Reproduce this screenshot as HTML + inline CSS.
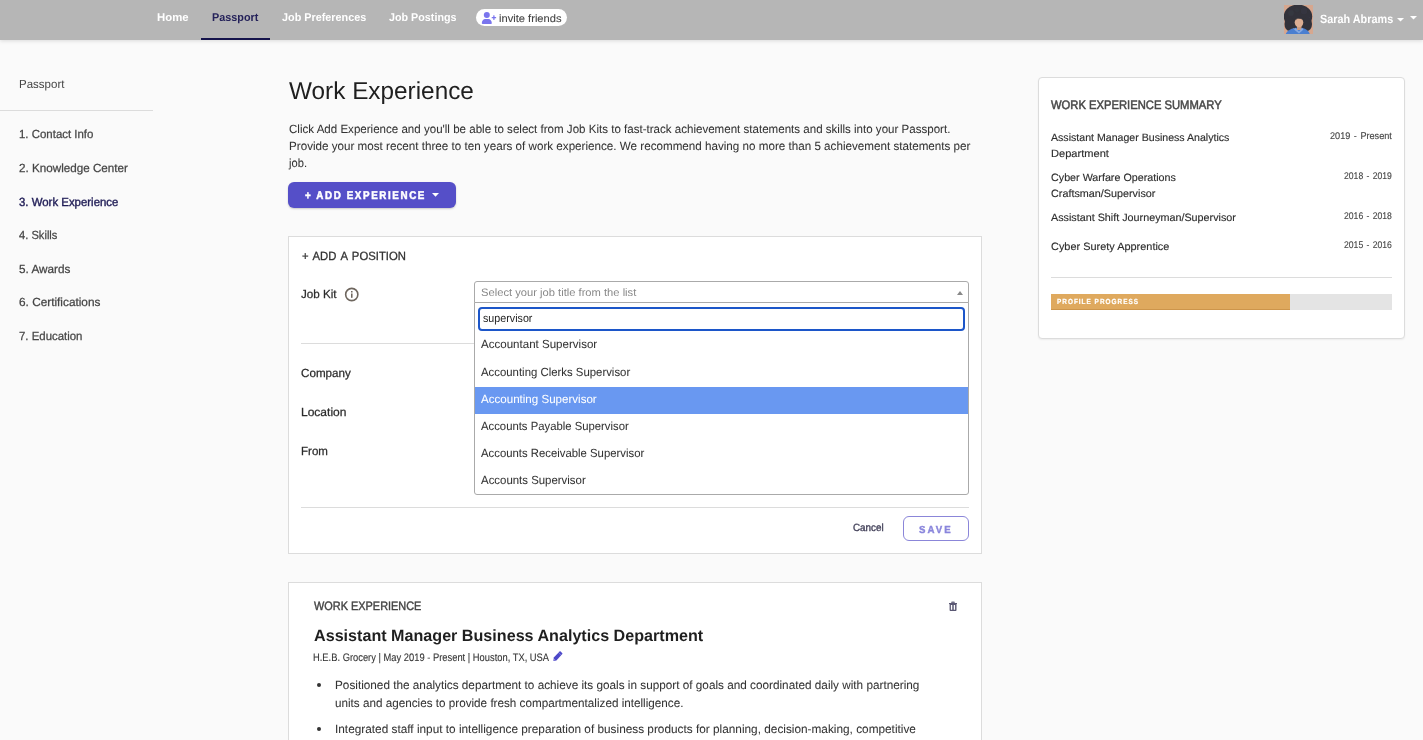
<!DOCTYPE html>
<html><head><meta charset="utf-8"><title>Work Experience</title>
<style>
html,body{margin:0;padding:0}
body{width:1423px;height:740px;overflow:hidden;background:#fafafa;font-family:"Liberation Sans",sans-serif;position:relative}
.a{position:absolute;box-sizing:border-box}
.t{position:absolute;transform-origin:0 0;white-space:nowrap;line-height:20px;font-family:"Liberation Sans",sans-serif}
#nav{left:0;top:0;width:1423px;height:40px;background:#b6b6b6;box-shadow:0 1px 4px rgba(0,0,0,.13)}
#tx{position:absolute;left:0;top:0;width:1423px;height:740px;will-change:transform}
.card{background:#fff;border:1px solid #dcdcdc}
</style></head><body>
<div class="a" id="nav"></div>
<div class="a" style="left:201px;top:38px;width:69px;height:2px;background:#15134b"></div>
<div class="a" style="left:476px;top:9px;width:91px;height:17px;border-radius:9px;background:#fff"></div>
<svg class="a" style="left:481px;top:11px" width="16" height="14" viewBox="0 0 16 14"><g fill="#7a75ee"><circle cx="5.8" cy="4" r="3"/><path d="M0.8 12.2c0-2.6 1.6-4.3 3.4-4.3h3.2c1.8 0 3.4 1.7 3.4 4.3c0 .5-.4.8-.8.8H1.6c-.4 0-.8-.3-.8-.8z"/><rect x="10.6" y="6" width="4.6" height="1.3" rx=".4"/><rect x="12.25" y="4.35" width="1.3" height="4.6" rx=".4"/></g></svg>
<!-- avatar -->
<svg class="a" style="left:1284px;top:5px" width="29" height="29" viewBox="0 0 29 29"><defs><filter id="bl" x="-10%" y="-10%" width="120%" height="120%"><feGaussianBlur stdDeviation="0.7"/></filter><clipPath id="cp"><rect width="29" height="29"/></clipPath></defs><g clip-path="url(#cp)"><rect width="29" height="29" fill="#d6a78f"/><g filter="url(#bl)"><ellipse cx="14" cy="11.5" rx="14.2" ry="12" fill="#31323a"/><circle cx="7" cy="8" r="3" fill="#3a3b45" opacity=".6"/><circle cx="20" cy="6" r="3.200" fill="#383a46" opacity=".55"/><circle cx="24" cy="14" r="2.600" fill="#3a3c4a" opacity=".5"/><circle cx="4.500" cy="16" r="2.500" fill="#383a46" opacity=".5"/><circle cx="13" cy="5" r="2.500" fill="#34353e" opacity=".6"/><ellipse cx="5.5" cy="19" rx="5" ry="7" fill="#31323a"/><ellipse cx="23" cy="19" rx="5" ry="7" fill="#31323a"/><path d="M1.500 30c1-4.500 6-7.200 13-7.200s10.500 2.700 11.500 7.200z" fill="#4b7fd0"/><rect x="13" y="20" width="4.5" height="5" fill="#c89a80"/><ellipse cx="15" cy="17.6" rx="4.3" ry="4.7" fill="#dcae93"/><path d="M10.5 15.5c1-3 7-3.500 9-.5c-2-1-3-1.300-4.500-1.300s-3 .5-4.500 1.800z" fill="#31323a"/><path d="M11.500 23l3.500 3.500l3-3.500l1.500 1.500l-4.500 4l-5-4z" fill="#86a9e0"/></g></g></svg>
<svg class="a" style="left:1397px;top:18px" width="7" height="4" viewBox="0 0 7 4"><path d="M0 0h7L3.5 3.6z" fill="#fff"/></svg>
<svg class="a" style="left:1410px;top:16px" width="7" height="4" viewBox="0 0 7 4"><path d="M0 0h7L3.5 3.6z" fill="#fff"/></svg>
<!-- sidebar -->
<div class="a" style="left:0;top:110px;width:153px;height:1px;background:#dcdcdc"></div>
<!-- add experience button -->
<div class="a" style="left:288px;top:182px;width:168px;height:26px;border-radius:6px;background:#554fc8;box-shadow:0 1px 2px rgba(0,0,0,.2)"></div>
<svg class="a" style="left:432px;top:192.5px" width="7" height="4" viewBox="0 0 7 4"><path d="M0 0h7L3.5 3.8z" fill="#fff"/></svg>
<!-- card 1 -->
<div class="a card" style="left:288px;top:236px;width:694px;height:318px"></div>
<svg class="a" style="left:344px;top:287px" width="16" height="16" viewBox="0 0 16 16"><circle cx="7.75" cy="7.5" r="6.1" fill="none" stroke="#6e665e" stroke-width="1.6"/><rect x="7" y="6.5" width="1.55" height="4.3" fill="#6e665e"/><rect x="7" y="4" width="1.55" height="1.5" fill="#6e665e"/></svg>
<div class="a" style="left:301px;top:343px;width:668px;height:1px;background:#dcdcdc"></div>
<div class="a" style="left:301px;top:507px;width:668px;height:1px;background:#dcdcdc"></div>
<div class="a" style="left:474px;top:281px;width:495px;height:22px;border:1px solid #aaa;border-radius:3px 3px 0 0;background:#fff"></div>
<div class="a" style="left:474px;top:302px;width:495px;height:193px;border:1px solid #aaa;border-radius:0 0 3px 3px;background:#fff"></div>
<svg class="a" style="left:957px;top:291px" width="6" height="4" viewBox="0 0 6 4"><path d="M0 4h6L3 0z" fill="#888"/></svg>
<div class="a" style="left:478px;top:307px;width:487px;height:24px;border:2px solid #1c56c9;border-radius:4px;background:#fff"></div>
<div class="a" style="left:475px;top:387px;width:493px;height:27px;background:#6998f1"></div>
<div class="a" style="left:903px;top:516px;width:66px;height:25px;border:1px solid #8b86d9;border-radius:6px;background:#fff"></div>
<!-- card 2 -->
<div class="a card" style="left:288px;top:582px;width:694px;height:200px"></div>
<svg class="a" style="left:552.5px;top:651px" width="10" height="10" viewBox="0 0 10 10"><path d="M0.4 10L0.8 6.6L6.6 .4Q7 0 7.4 .3L9.3 2.2Q9.6 2.6 9.3 3L3.4 9.6z" fill="#4d48c9"/><path d="M5.5 1.6L8.2 4.3" stroke="#fff" stroke-width=".5" opacity=".5"/><path d="M1.3 8.1l.9 .9l-.9.2z" fill="#fff" opacity=".75"/></svg>
<svg class="a" style="left:949px;top:601px" width="8" height="10" viewBox="0 0 8 10"><g fill="#5a5873"><rect x="2.2" y="0.5" width="3.6" height="2" rx=".8" opacity=".85"/><rect x="0" y="2" width="8" height="1.1"/><path d="M.6 3h6.9v5.9c0 .6-.4 1-1 1H1.6c-.6 0-1-.4-1-1z M1.9 4.1v4.6h1.35V4.1z M4.75 4.1v4.6H6.100V4.1z" fill-rule="evenodd"/></g></svg>
<div class="a" style="left:316.75px;top:682.8px;width:4px;height:4px;border-radius:50%;background:#333"></div>
<div class="a" style="left:316.75px;top:726.8px;width:4px;height:4px;border-radius:50%;background:#333"></div>
<!-- summary -->
<div class="a card" style="left:1038px;top:77px;width:367px;height:262px;border-radius:4px;box-shadow:0 1px 2px rgba(0,0,0,.06)"></div>
<div class="a" style="left:1051px;top:277px;width:341px;height:1px;background:#dcdcdc"></div>
<div class="a" style="left:1051px;top:294px;width:341px;height:16px;background:#e4e4e4"></div>
<div class="a" style="left:1051px;top:294px;width:239px;height:16px;background:#dfa95e;box-shadow:inset 0 -1px 0 rgba(150,90,20,.25)"></div>
<div id="tx">
<span class="t" style="left:157.1px;top:6.90px;font-size:11.3px;color:#fff;letter-spacing:0.000px;font-weight:700;transform:scaleX(1.0067) skewX(0.05deg);">Home</span>
<span class="t" style="left:212.1px;top:6.90px;font-size:11.3px;color:#25225a;letter-spacing:0.000px;font-weight:700;transform:scaleX(0.9598) skewX(0.05deg);">Passport</span>
<span class="t" style="left:281.8px;top:6.90px;font-size:11.3px;color:#fff;letter-spacing:0.000px;font-weight:700;transform:scaleX(0.9588) skewX(0.05deg);">Job Preferences</span>
<span class="t" style="left:389.1px;top:6.90px;font-size:11.3px;color:#fff;letter-spacing:0.000px;font-weight:700;transform:scaleX(0.9515) skewX(0.05deg);">Job Postings</span>
<span class="t" style="left:498.5px;top:7.70px;font-size:10.7px;color:#444;letter-spacing:0.000px;-webkit-text-stroke:0.1px #444;transform:scaleX(1.0417) skewX(0.05deg);">invite friends</span>
<span class="t" style="left:1319.8px;top:8.60px;font-size:12.0px;color:#fff;letter-spacing:0.000px;font-weight:700;transform:scaleX(0.9044) skewX(0.05deg);">Sarah Abrams</span>
<span class="t" style="left:19.0px;top:74.00px;font-size:11.8px;color:#444;letter-spacing:0.000px;transform:scaleX(0.9750) skewX(0.05deg);">Passport</span>
<span class="t" style="left:19.0px;top:124.00px;font-size:11.8px;color:#444;letter-spacing:0.000px;-webkit-text-stroke:0.25px #444;transform:scaleX(0.9696) skewX(0.05deg);">1. Contact Info</span>
<span class="t" style="left:19.0px;top:158.00px;font-size:11.8px;color:#444;letter-spacing:0.000px;-webkit-text-stroke:0.25px #444;transform:scaleX(0.9883) skewX(0.05deg);">2. Knowledge Center</span>
<span class="t" style="left:19.0px;top:192.00px;font-size:11.8px;color:#211e57;letter-spacing:0.000px;-webkit-text-stroke:0.4px #211e57;transform:scaleX(0.9675) skewX(0.05deg);">3. Work Experience</span>
<span class="t" style="left:19.0px;top:225.00px;font-size:11.8px;color:#444;letter-spacing:0.000px;-webkit-text-stroke:0.25px #444;transform:scaleX(0.9445) skewX(0.05deg);">4. Skills</span>
<span class="t" style="left:19.0px;top:259.00px;font-size:11.8px;color:#444;letter-spacing:0.000px;-webkit-text-stroke:0.25px #444;transform:scaleX(0.9962) skewX(0.05deg);">5. Awards</span>
<span class="t" style="left:19.0px;top:292.00px;font-size:11.8px;color:#444;letter-spacing:0.000px;-webkit-text-stroke:0.25px #444;transform:scaleX(1.0011) skewX(0.05deg);">6. Certifications</span>
<span class="t" style="left:19.0px;top:326.00px;font-size:11.8px;color:#444;letter-spacing:0.000px;-webkit-text-stroke:0.25px #444;transform:scaleX(0.9666) skewX(0.05deg);">7. Education</span>
<span class="t" style="left:288.5px;top:80.50px;font-size:24.5px;color:#1f1f1f;letter-spacing:0.000px;transform:scaleX(0.9935) skewX(0.05deg);">Work Experience</span>
<span class="t" style="left:288.5px;top:119.00px;font-size:11.9px;color:#333;letter-spacing:0.000px;-webkit-text-stroke:0.05px #333;transform:scaleX(0.9721) skewX(0.05deg);">Click Add Experience and you&#x27;ll be able to select from Job Kits to fast-track achievement statements and skills into your Passport.</span>
<span class="t" style="left:288.5px;top:136.00px;font-size:11.9px;color:#333;letter-spacing:0.000px;-webkit-text-stroke:0.05px #333;transform:scaleX(0.9794) skewX(0.05deg);">Provide your most recent three to ten years of work experience. We recommend having no more than 5 achievement statements per</span>
<span class="t" style="left:288.9px;top:153.00px;font-size:11.9px;color:#333;letter-spacing:0.000px;-webkit-text-stroke:0.05px #333;transform:scaleX(0.9389) skewX(0.05deg);">job.</span>
<span class="t" style="left:305.0px;top:185.00px;font-size:11.2px;color:#fff;letter-spacing:1.823px;font-weight:700;-webkit-text-stroke:0.5px #fff;transform:scaleX(0.8776) skewX(0.05deg);">+ ADD EXPERIENCE</span>
<span class="t" style="left:301.5px;top:246.00px;font-size:11.9px;color:#333;letter-spacing:0.000px;-webkit-text-stroke:0.3px #333;transform:scaleX(0.9510) skewX(0.05deg);word-spacing:1.5px;">+ ADD A POSITION</span>
<span class="t" style="left:301.1px;top:284.00px;font-size:11.8px;color:#2b2b2b;letter-spacing:0.000px;-webkit-text-stroke:0.25px #2b2b2b;transform:scaleX(0.9867) skewX(0.05deg);">Job Kit</span>
<span class="t" style="left:300.8px;top:363.00px;font-size:11.8px;color:#2b2b2b;letter-spacing:0.000px;-webkit-text-stroke:0.25px #2b2b2b;transform:scaleX(0.9861) skewX(0.05deg);">Company</span>
<span class="t" style="left:300.8px;top:402.00px;font-size:11.8px;color:#2b2b2b;letter-spacing:0.000px;-webkit-text-stroke:0.25px #2b2b2b;transform:scaleX(1.0177) skewX(0.05deg);">Location</span>
<span class="t" style="left:300.8px;top:441.00px;font-size:11.8px;color:#2b2b2b;letter-spacing:0.000px;-webkit-text-stroke:0.25px #2b2b2b;transform:scaleX(0.9771) skewX(0.05deg);">From</span>
<span class="t" style="left:481.1px;top:282.00px;font-size:10.8px;color:#888;letter-spacing:0.000px;transform:scaleX(1.0351) skewX(0.05deg);">Select your job title from the list</span>
<span class="t" style="left:482.5px;top:307.50px;font-size:11.5px;color:#222;letter-spacing:0.000px;transform:scaleX(0.9310) skewX(0.05deg);">supervisor</span>
<span class="t" style="left:480.7px;top:334.30px;font-size:11.8px;color:#333;letter-spacing:0.000px;-webkit-text-stroke:0.05px #333;transform:scaleX(0.9789) skewX(0.05deg);">Accountant Supervisor</span>
<span class="t" style="left:480.7px;top:362.20px;font-size:11.8px;color:#333;letter-spacing:0.000px;-webkit-text-stroke:0.05px #333;transform:scaleX(0.9641) skewX(0.05deg);">Accounting Clerks Supervisor</span>
<span class="t" style="left:480.7px;top:389.00px;font-size:11.8px;color:#fff;letter-spacing:0.000px;-webkit-text-stroke:0.05px #fff;transform:scaleX(0.9801) skewX(0.05deg);">Accounting Supervisor</span>
<span class="t" style="left:480.7px;top:416.00px;font-size:11.8px;color:#333;letter-spacing:0.000px;-webkit-text-stroke:0.05px #333;transform:scaleX(0.9584) skewX(0.05deg);">Accounts Payable Supervisor</span>
<span class="t" style="left:480.7px;top:443.00px;font-size:11.8px;color:#333;letter-spacing:0.000px;-webkit-text-stroke:0.05px #333;transform:scaleX(0.9610) skewX(0.05deg);">Accounts Receivable Supervisor</span>
<span class="t" style="left:480.7px;top:470.00px;font-size:11.8px;color:#333;letter-spacing:0.000px;-webkit-text-stroke:0.05px #333;transform:scaleX(0.9676) skewX(0.05deg);">Accounts Supervisor</span>
<span class="t" style="left:853.3px;top:516.90px;font-size:10.5px;color:#46445c;letter-spacing:0.000px;-webkit-text-stroke:0.38px #46445c;transform:scaleX(0.9361) skewX(0.05deg);">Cancel</span>
<span class="t" style="left:919.4px;top:519.90px;font-size:10.2px;color:#8a86dc;letter-spacing:2.109px;font-weight:700;-webkit-text-stroke:0.4px #8a86dc;transform:scaleX(0.9481) skewX(0.05deg);">SAVE</span>
<span class="t" style="left:313.5px;top:596.00px;font-size:12.2px;color:#444;letter-spacing:0.000px;-webkit-text-stroke:0.4px #444;transform:scaleX(0.8959) skewX(0.05deg);">WORK EXPERIENCE</span>
<span class="t" style="left:313.5px;top:624.80px;font-size:16.3px;color:#1f1f1f;letter-spacing:0.000px;font-weight:700;transform:scaleX(0.9904) skewX(0.05deg);">Assistant Manager Business Analytics Department</span>
<span class="t" style="left:313.3px;top:647.20px;font-size:10.9px;color:#333;letter-spacing:0.000px;-webkit-text-stroke:0.1px #333;transform:scaleX(0.8591) skewX(0.05deg);">H.E.B. Grocery | May 2019 - Present | Houston, TX, USA</span>
<span class="t" style="left:335.0px;top:675.00px;font-size:11.9px;color:#333;letter-spacing:0.000px;-webkit-text-stroke:0.05px #333;transform:scaleX(0.9889) skewX(0.05deg);">Positioned the analytics department to achieve its goals in support of goals and coordinated daily with partnering</span>
<span class="t" style="left:335.0px;top:693.00px;font-size:11.9px;color:#333;letter-spacing:0.000px;-webkit-text-stroke:0.05px #333;transform:scaleX(0.9834) skewX(0.05deg);">units and agencies to provide fresh compartmentalized intelligence.</span>
<span class="t" style="left:335.0px;top:719.00px;font-size:11.9px;color:#333;letter-spacing:0.000px;-webkit-text-stroke:0.05px #333;transform:scaleX(0.9934) skewX(0.05deg);">Integrated staff input to intelligence preparation of business products for planning, decision-making, competitive</span>
<span class="t" style="left:1051.3px;top:95.00px;font-size:12.3px;color:#484848;letter-spacing:0.000px;-webkit-text-stroke:0.5px #484848;transform:scaleX(0.9128) skewX(0.05deg);">WORK EXPERIENCE SUMMARY</span>
<span class="t" style="left:1051.0px;top:126.50px;font-size:10.6px;color:#2e2e2e;letter-spacing:0.000px;-webkit-text-stroke:0.14px #2e2e2e;transform:scaleX(0.9999) skewX(0.05deg);">Assistant Manager Business Analytics</span>
<span class="t" style="left:1051.0px;top:142.50px;font-size:10.6px;color:#2e2e2e;letter-spacing:0.000px;-webkit-text-stroke:0.14px #2e2e2e;transform:scaleX(1.0459) skewX(0.05deg);">Department</span>
<span class="t" style="left:1051.0px;top:166.50px;font-size:10.6px;color:#2e2e2e;letter-spacing:0.000px;-webkit-text-stroke:0.14px #2e2e2e;transform:scaleX(1.0134) skewX(0.05deg);">Cyber Warfare Operations</span>
<span class="t" style="left:1051.0px;top:182.50px;font-size:10.6px;color:#2e2e2e;letter-spacing:0.000px;-webkit-text-stroke:0.14px #2e2e2e;transform:scaleX(1.0190) skewX(0.05deg);">Craftsman/Supervisor</span>
<span class="t" style="left:1051.0px;top:206.50px;font-size:10.6px;color:#2e2e2e;letter-spacing:0.000px;-webkit-text-stroke:0.14px #2e2e2e;transform:scaleX(1.0162) skewX(0.05deg);">Assistant Shift Journeyman/Supervisor</span>
<span class="t" style="left:1051.0px;top:236.00px;font-size:10.6px;color:#2e2e2e;letter-spacing:0.000px;-webkit-text-stroke:0.14px #2e2e2e;transform:scaleX(1.0311) skewX(0.05deg);">Cyber Surety Apprentice</span>
<span class="t" style="left:1329.5px;top:125.70px;font-size:9.7px;color:#444;letter-spacing:0.000px;-webkit-text-stroke:0.12px #444;transform:scaleX(0.9444) skewX(0.05deg);word-spacing:1px;">2019 - Present</span>
<span class="t" style="left:1343.5px;top:165.70px;font-size:9.7px;color:#444;letter-spacing:0.000px;-webkit-text-stroke:0.12px #444;transform:scaleX(0.8917) skewX(0.05deg);word-spacing:1px;">2018 - 2019</span>
<span class="t" style="left:1343.5px;top:205.70px;font-size:9.7px;color:#444;letter-spacing:0.000px;-webkit-text-stroke:0.12px #444;transform:scaleX(0.8917) skewX(0.05deg);word-spacing:1px;">2016 - 2018</span>
<span class="t" style="left:1343.5px;top:234.70px;font-size:9.7px;color:#444;letter-spacing:0.000px;-webkit-text-stroke:0.12px #444;transform:scaleX(0.8917) skewX(0.05deg);word-spacing:1px;">2015 - 2016</span>
<span class="t" style="left:1057.2px;top:291.70px;font-size:7.4px;color:#fff;letter-spacing:1.151px;font-weight:700;-webkit-text-stroke:0.22px #fff;transform:scaleX(0.8686) skewX(0.05deg);">PROFILE PROGRESS</span>
</div>
</body></html>
